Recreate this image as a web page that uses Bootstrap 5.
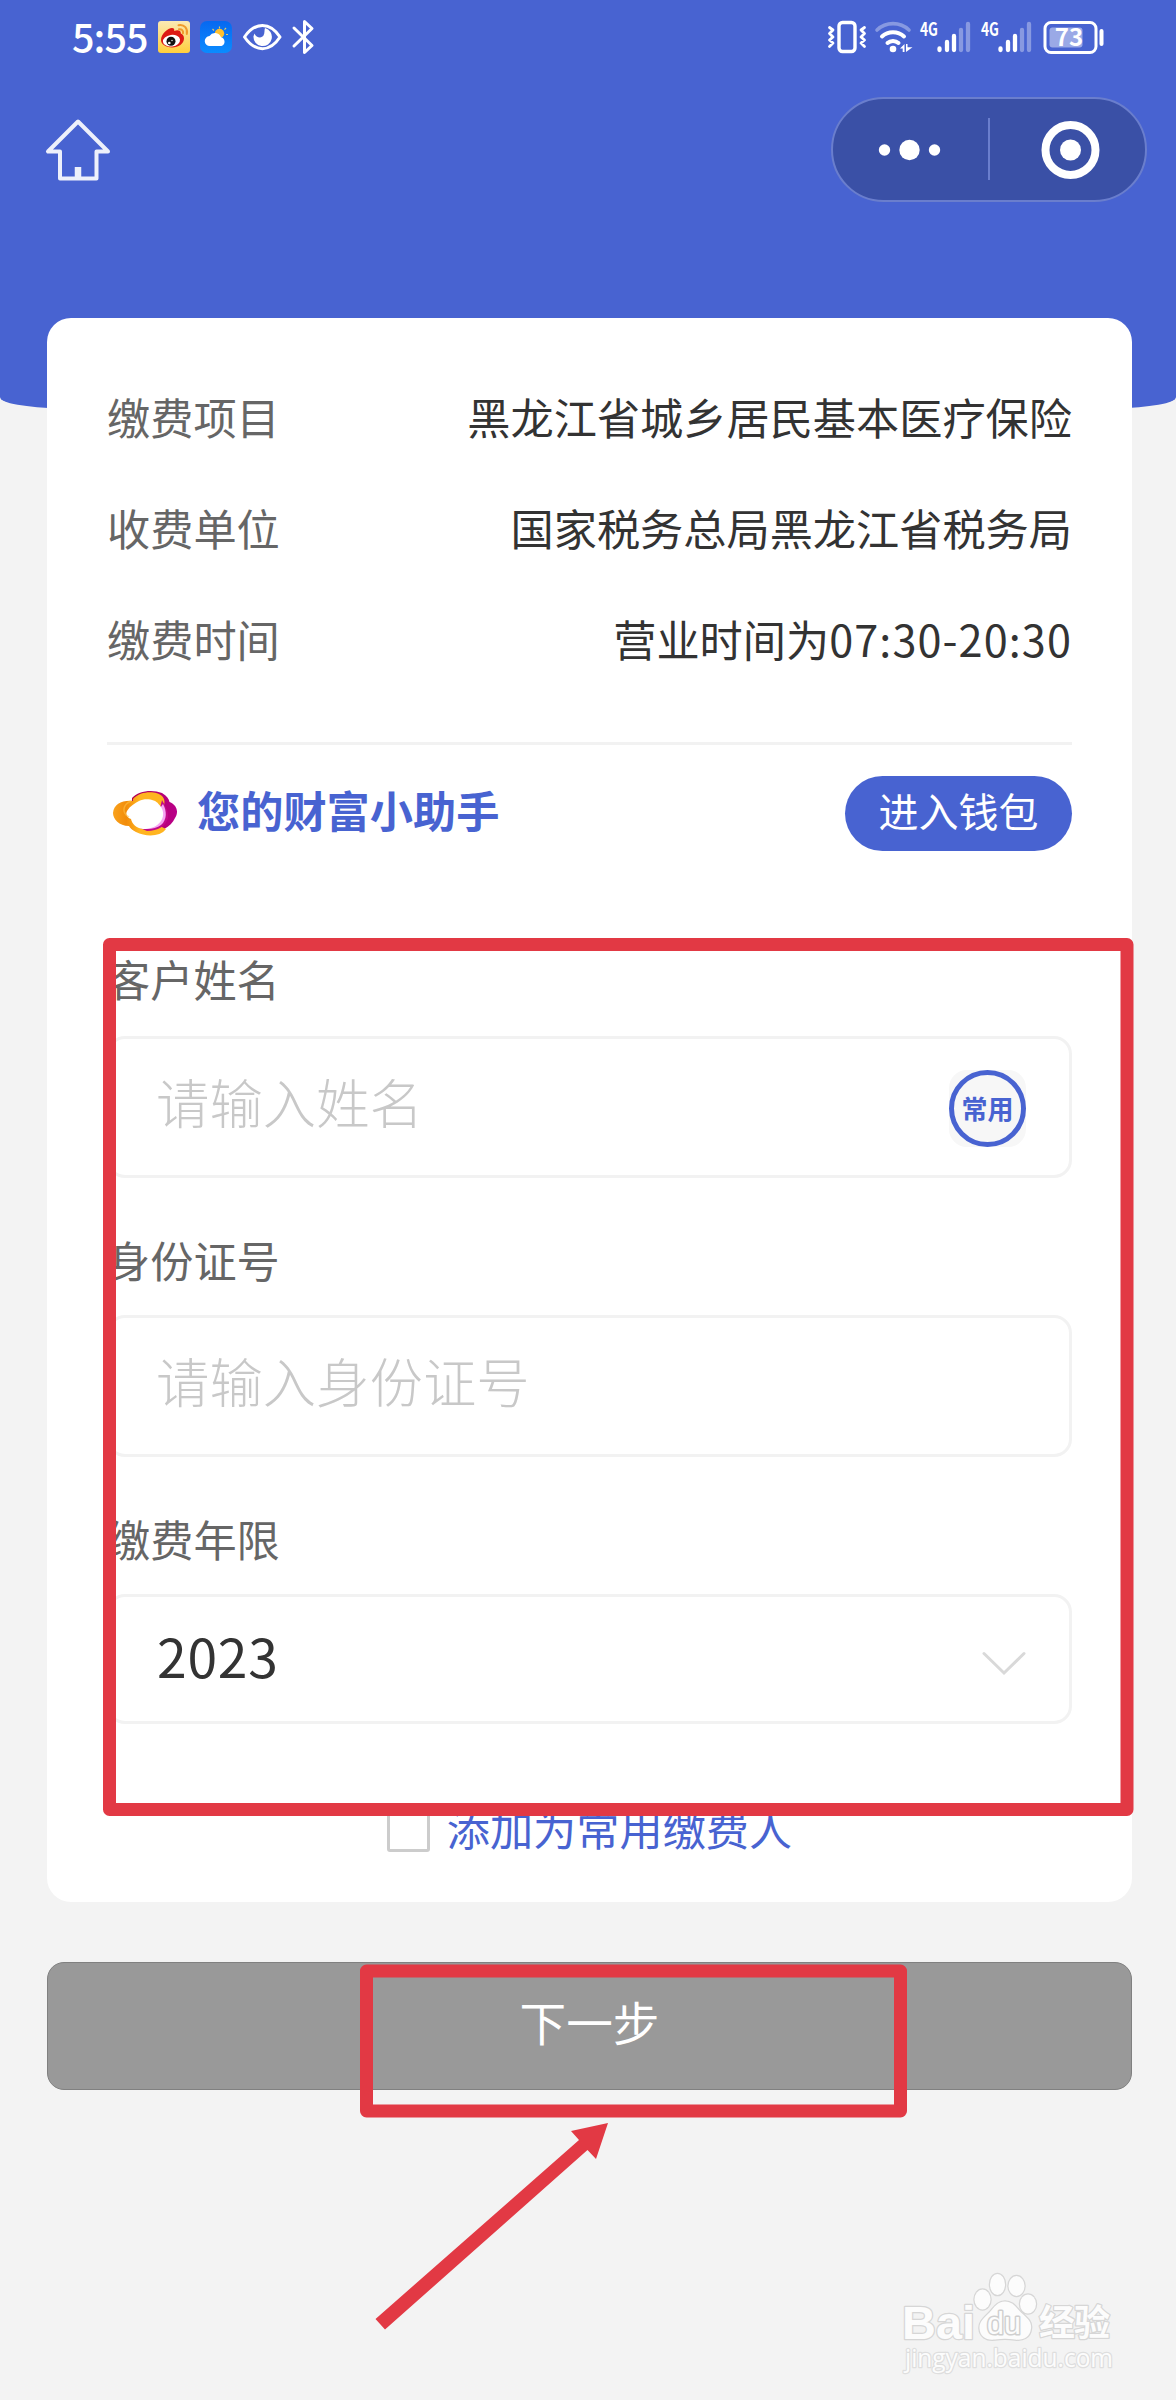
<!DOCTYPE html>
<html lang="zh-CN">
<head>
<meta charset="utf-8">
<meta name="viewport" content="width=device-width, initial-scale=1">
<title>缴费</title>
<link href="https://cdn.jsdelivr.net/npm/bootstrap@5.3.0/dist/css/bootstrap.min.css" rel="stylesheet">
<style>
:root { --brand: #4863d1; --mark-red: #e23944; --line: #f2f2f2; }
body { background: #f3f3f3; font-family: "Noto Sans CJK SC", "Noto Sans", sans-serif; font-size: 43.2px; line-height: 1.2; color: #333; overflow-x: hidden; }
.screen { width: 1176px; height: 2400px; overflow: hidden; }
.hero { height: 408px; background: var(--brand); border-radius: 0 0 60px 60px / 0 0 11px 11px; }
.statusbar { height: 74px; padding: 0 71px 0 72px; }
.clock { font-size: 39.500px; font-weight: 500; line-height: 46px; width: 86px; letter-spacing: -.9px; padding-bottom: 3px; }
.topbar { height: 151px; padding: 0 29px 0 45px; }
.capsule { width: 316px; height: 105px; border: 2px solid #6a7ecd; background: #3a50a6; }
.pay-card { width: 1085px; margin: -90px 0 0 47px; height: 1584px; border: 0; border-radius: 24px; padding: 42px 60px 50px 60px; }
.info-row { height: 111px; padding-top: 3px; }
.info-row .k, .field-label { color: #666; }
.num { letter-spacing: 1.100px; }
.divider { height: 3px; background: var(--line); margin: 49px 0 31px; }
.helper { height: 75px; }
.helper-title { color: var(--brand); font-weight: 700; padding-bottom: 8px; margin-left: 19px; }
.btn-wallet, .btn-wallet:hover { background: var(--brand); color: #fff; font-size: 40px; line-height: 48px; width: 227px; height: 75px; padding: 3px 0 10px; border: 0; }
.field-label { height: 60px; line-height: 60px; margin-bottom: 26px; }
.field-label.first { line-height: 57px; }
.field, .field:focus { height: 142px; border: 3px solid var(--line); border-radius: 18px; padding: 0 160px 14px 46px; font-size: 53.4px; font-weight: 300; color: #333; background: #fff; }
.field::placeholder { color: #c8c8c8; opacity: 1; }
.field-year { height: 130px; padding: 0 43px 0 47px; font-weight: 400; }
.field-year span { letter-spacing: .8px; padding-bottom: 8px; }
.often { right: 46px; top: 34px; width: 77px; height: 77px; background: #f7f7f7; border-radius: 18px; }
.often span { width: 77px; height: 77px; border: 5px solid var(--brand); color: var(--brand); font-size: 26px; font-weight: 700; padding-bottom: 1px; }
.agree { height: 43px; margin-top: 85px; color: var(--brand); line-height: 43px; }
.agree .form-check-input { width: 43px; height: 43px; border: 3px solid #ccc; border-radius: 3px; margin: 0 17px 0 0; }
.agree label { padding-bottom: 7px; }
.btn-next, .btn-next:hover { width: 1085px; height: 128px; margin: 60px 0 0 47px; background: #999; border: 1.5px solid #808080; border-radius: 17px; color: #fff; font-size: 46.6px; padding: 0 0 11px; }
.overlay { left: 0; top: 0; pointer-events: none; z-index: 5; }
svg { display: block; flex: none; }
svg text { font-family: "Noto Sans CJK SC", sans-serif; }
</style>
<script src="https://cdn.jsdelivr.net/npm/bootstrap@5.3.0/dist/js/bootstrap.bundle.min.js"></script>
</head>
<body>
<div class="screen position-relative">
  <header class="hero">
    <div class="statusbar d-flex align-items-center text-white">
      <div class="clock">5:55</div>
      <!-- weibo, weather, eye-comfort, bluetooth -->
      <svg width="158" height="36" viewBox="158 18 158 36">
        <defs><linearGradient id="wb" x1="0" y1="0" x2="0" y2="1"><stop offset="0" stop-color="#fbe9b4"/><stop offset="1" stop-color="#ffcf3c"/></linearGradient>
        <linearGradient id="sky" x1="0" y1="0" x2="0" y2="1"><stop offset="0" stop-color="#0768f0"/><stop offset="1" stop-color="#0a8cff"/></linearGradient></defs>
        <rect x="158" y="20" width="32" height="32" rx="3" fill="url(#wb)"/>
        <path d="M161 39C161 33 168 27 172 27c2 0 2.500 1 2.200 3 3-1.200 7-1 6.600 2.400 2.200 1 3.200 2.600 3.200 5 0 5-5.500 9-12 9-6 0-11-3-11-7.400z" fill="#dd1a14"/>
        <ellipse cx="171.500" cy="39.700" rx="8.600" ry="5.800" fill="#fff" transform="rotate(-8 171.500 39.700)"/>
        <circle cx="171" cy="40.300" r="4.500" fill="#111"/><circle cx="169.300" cy="42" r="1.300" fill="#fff"/><circle cx="172" cy="39.500" r=".7" fill="#fff"/>
        <path d="M178.500 24.200c6-1.200 9.500 3.500 8.300 8.800M179 28.200c2.800-.4 4.500 1.500 4 4" fill="none" stroke="#f09a2c" stroke-width="2" stroke-linecap="round"/>
        <rect x="200" y="20" width="32" height="32" rx="7" fill="url(#sky)"/>
        <g stroke="#dfc96b" stroke-width="1.200"><path d="M219.500 25.500v2M212.500 28l1.500 1.500M226 27l-1.500 1.700M226 33.500h2"/></g>
        <circle cx="219.500" cy="32.500" r="4.700" fill="#ffc02e"/>
        <path d="M210 45a5 5 0 0 1-.5-10 6.500 6.500 0 0 1 11.500 1.200A4.600 4.600 0 0 1 221.500 45z" fill="#fff"/>
        <path d="M244.500 36C255 20.500 270 20.500 280 36 270 51.500 255 51.500 244.500 36z" fill="none" stroke="#fff" stroke-width="3" stroke-linejoin="round"/>
        <path d="M265 27a9.200 9.200 0 1 1-11.500 8.200l1-2.800c1.500 4.500 7.200 5.200 9 2.200 1.500-3 .6-5.500 1.500-7.600z" fill="#fff"/>
        <path d="M294 27l18 17.500-7.500 7V20.500l7.500 7L294 45" fill="none" stroke="#fff" stroke-width="3" stroke-linecap="round" stroke-linejoin="round"/>
      </svg>
      <!-- vibrate, wi-fi, two signals, battery -->
      <svg class="ms-auto" width="278" height="56" viewBox="827 8 278 56">
        <g fill="none" stroke="#fff" stroke-linecap="round" stroke-linejoin="round">
          <rect x="839" y="21.500" width="16" height="29" rx="3.500" stroke-width="3.400"/>
          <path d="M829.500 26.500l3.500 2.500-3.500 3.500 3.500 3.500-3.500 3 3.500 3-3.500 3.500M864.500 26.500l-3.500 2.500 3.500 3.500-3.500 3.500 3.500 3-3.500 3 3.500 3.500" stroke-width="2.800"/>
          <path d="M877 29c9-8.500 23-8.500 32 0" stroke-width="3.600" opacity=".35"/>
          <path d="M882 35.500c6-5.600 16-5.600 22 0M887.500 42c3-2.800 8-2.800 11 0" stroke-width="4"/>
        </g>
        <circle cx="893" cy="48" r="3.300" fill="#fff"/>
        <path d="M900 47.500l4.500-4.500v8h-1.800v-3.500zM906 51v-8h1.500v3.300h5z" fill="#fff"/>
        <g id="sig"><text x="920" y="34.500" font-size="18.500" font-weight="700" fill="#fff" textLength="18" lengthAdjust="spacingAndGlyphs">4G</text>
          <g stroke="#fff" stroke-width="4.300" stroke-linecap="round"><path d="M939.500 47.500v1.500M947 41v8M954 35v14"/><path d="M961 29v20M968 23v26" opacity=".35"/></g></g>
        <use href="#sig" x="61"/>
        <rect x="1045" y="21.500" width="51" height="30" rx="6" fill="none" stroke="#fff" stroke-width="3"/>
        <rect x="1049.500" y="26.500" width="33" height="20" rx="3" fill="#fff" opacity=".45"/>
        <text x="1069" y="45" font-size="24" font-weight="700" fill="#fff" text-anchor="middle">73</text>
        <path d="M1101.500 30v13" stroke="#fff" stroke-width="4" stroke-linecap="round"/>
      </svg>
    </div>
    <div class="topbar d-flex align-items-center justify-content-between">
      <svg width="66" height="66" viewBox="45 117 66 66" fill="none" stroke="#edf0fb" stroke-width="4" stroke-linejoin="round">
        <path d="M78 121.500L48 151.500h12V178.500H96.500V151.500H108z"/><path d="M78 167v11" stroke-width="6.500"/>
      </svg>
      <div class="capsule rounded-pill">
        <svg width="312" height="101" viewBox="833 100 312 101" fill="#fff">
          <circle cx="884.500" cy="151" r="5.700"/><circle cx="909.500" cy="151" r="10.200"/><circle cx="934.500" cy="151" r="5.700"/>
          <path d="M989 119v62" stroke="#6a7ecd" stroke-width="2"/>
          <circle cx="1070.500" cy="151" r="25" fill="none" stroke="#fff" stroke-width="8"/><circle cx="1070.500" cy="151" r="10.500"/>
        </svg>
      </div>
    </div>
  </header>

  <main class="card pay-card">
    <div class="info-row d-flex align-items-center justify-content-between"><span class="k">缴费项目</span><span>黑龙江省城乡居民基本医疗保险</span></div>
    <div class="info-row d-flex align-items-center justify-content-between"><span class="k">收费单位</span><span>国家税务总局黑龙江省税务局</span></div>
    <div class="info-row d-flex align-items-center justify-content-between"><span class="k">缴费时间</span><span>营业时间为<span class="num">07:30-20:30</span></span></div>
    <div class="divider"></div>
    <div class="helper d-flex align-items-center">
      <svg width="71" height="50" viewBox="107 789 71 50">
        <defs><linearGradient id="gold" x1="0" y1="0" x2="1" y2="0"><stop offset="0" stop-color="#f9a21c"/><stop offset=".25" stop-color="#f28c0a"/><stop offset=".5" stop-color="#ffb420"/><stop offset="1" stop-color="#ffb520"/></linearGradient>
        <linearGradient id="plum" x1="0" y1="0" x2="1" y2="0"><stop offset="0" stop-color="#b0004e"/><stop offset="1" stop-color="#b9008a"/></linearGradient></defs>
        <path d="M132 798C138 791 152 789 162 793 167 796 169 799 169.500 802 177 805 179 812 175 818 171 827 160 833 146 833 140 833 134 831 131 828z" fill="url(#plum)"/>
        <path d="M133 799C141 790 157 791 162 796 165 799 165 803 163.500 807L160 826 166 829C160 837 146 837 136 832 132 830 130 828 129 826 119 826 113 819 113 813 114 804 122 800 133 801z" fill="url(#gold)"/>
        <path d="M162 800C165 806 169 811 168 818 166 826 158 831 147 831L140 828 160 808z" fill="#c10a8a"/>
        <path d="M163 804C167 811 167 820 161 825 157 828 151 829.500 145 829z" fill="#f6a6f3"/>
        <path d="M127 811C130 806 135 803 139 801 145 798 155 799 158.500 804 163 808 165 815 161 821 157 827 150 829 143 829 136 828 132 824 131 819 128 818 125 815 127 811z" fill="#fff"/>
        <path d="M131 801c-7 3-9 9-5 14l3 2" fill="none" stroke="#fdc044" stroke-width="1.500" opacity=".6"/>
      </svg>
      <span class="helper-title">您的财富小助手</span>
      <button class="btn btn-wallet rounded-pill ms-auto" type="button">进入钱包</button>
    </div>

    <form>
      <div class="position-relative" style="margin-top:99px">
        <div class="field-label first">客户姓名</div>
        <div class="position-relative">
          <input class="form-control field" type="text" placeholder="请输入姓名" aria-label="客户姓名">
          <div class="often position-absolute"><span class="rounded-circle d-flex align-items-center justify-content-center">常用</span></div>
        </div>
      </div>
      <div style="margin-top:51px">
        <div class="field-label">身份证号</div>
        <input class="form-control field" type="text" placeholder="请输入身份证号" aria-label="身份证号">
      </div>
      <div style="margin-top:51px">
        <div class="field-label">缴费年限</div>
        <div class="field field-year d-flex align-items-center justify-content-between">
          <span>2023</span>
          <svg width="44" height="26" viewBox="0 0 44 26" fill="none" stroke="#d9d9d9" stroke-width="3" stroke-linecap="round" style="margin-top:8px"><path d="M2 3.500L22 23 42 3.500"/></svg>
        </div>
      </div>
      <div class="agree d-flex justify-content-center align-items-center">
        <input class="form-check-input" type="checkbox" id="often-payer"><label for="often-payer">添加为常用缴费人</label>
      </div>
    </form>
  </main>

  <button class="btn btn-next d-flex align-items-center justify-content-center" type="button">下一步</button>

  <!-- red annotations and watermark laid over the page -->
  <svg class="overlay position-absolute" width="1176" height="2400" viewBox="0 0 1176 2400">
    <g fill="none" stroke="#e23944" stroke-width="13" stroke-linejoin="round">
      <rect x="109.500" y="944.500" width="1017.500" height="865"/>
      <rect x="366.500" y="1971" width="534" height="140"/>
    </g>
    <path d="M608 2123L571 2131 579 2140 375.500 2319 385 2329.500 587.500 2150 596 2159z" fill="#e23944"/>
    <g fill="#fcfcfc" stroke="#d6d6d6" stroke-width="2.500" paint-order="stroke" stroke-linejoin="round">
      <text x="902" y="2339" font-size="47" font-weight="700" textLength="73" lengthAdjust="spacingAndGlyphs" style="font-family:'Liberation Sans',sans-serif">Bai</text>
      <ellipse cx="982.500" cy="2299.500" rx="8" ry="10"/><ellipse cx="997.500" cy="2284.500" rx="7.500" ry="10.500"/><ellipse cx="1016.500" cy="2286" rx="8" ry="10"/><ellipse cx="1028" cy="2304" rx="8" ry="9.500"/>
      <path d="M1005 2301.500c8 0 11 6 16 11 6 5.500 11 9 10 16-1 9-8 12-16 11-7-1-13-1-20 0-9 1-15-3-15.500-11-.5-7 5-11 10-16 5-5.500 8-11 15.500-11z"/>
      <text x="987" y="2334" font-size="31" textLength="34" lengthAdjust="spacingAndGlyphs" style="font-family:'Liberation Sans',sans-serif" stroke="#cfcfcf" stroke-width="3">du</text>
      <text x="1039" y="2336" font-size="36" font-weight="700" textLength="71">经验</text>
      <text x="905" y="2367" font-size="25" textLength="208" lengthAdjust="spacingAndGlyphs" stroke="#dedede" style="font-family:'Open Sans','Noto Sans',sans-serif">jingyan.baidu.com</text>
    </g>
  </svg>
</div>
</body>
</html>
